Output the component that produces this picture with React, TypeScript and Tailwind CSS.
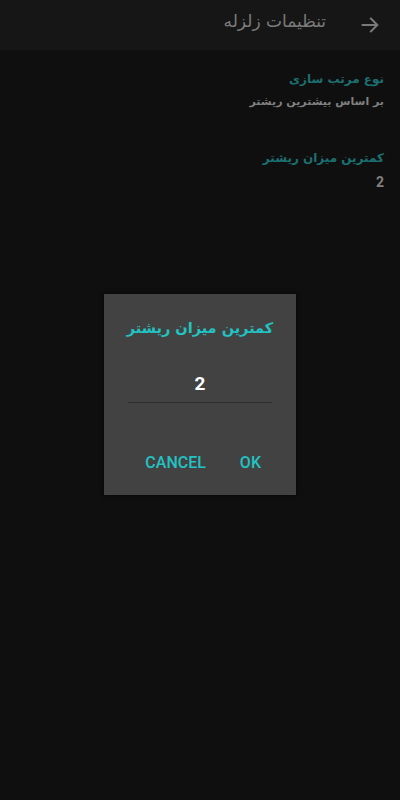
import React from "react";

const fa = { fontFamily: '"DejaVu Sans", "Noto Sans", sans-serif' };

const App = () => {
  return (
    <div className="relative w-[400px] h-[800px] bg-[#0f0f0f] overflow-hidden" dir="rtl">
      {/* header */}
      <header className="h-[50px] bg-[#161616] flex items-center pr-[19px]">
        <svg width="22" height="22" viewBox="0 0 24 24" fill="none" stroke="#7a7a7a" strokeWidth="2.2" strokeLinecap="square">
          <path d="M4 12h15M13 5l7 7-7 7" />
        </svg>
        <h1 className="mr-[33px] text-[17px] text-[#7c7c7c] mb-[6px]" style={fa}>
          تنظیمات زلزله
        </h1>
      </header>

      <div className="px-4 pt-[20px]" style={fa}>
        <div className="flex flex-col gap-[6px]">
          <div className="text-[12px] font-bold text-[#1c7070]">نوع مرتب سازی</div>
          <div className="text-[11px] font-bold text-[#808080]">بر اساس بیشترین ریشتر</div>
        </div>
        <div className="flex flex-col gap-[5px] mt-[38px]">
          <div className="text-[12px] font-bold text-[#1c7070]">کمترین میزان ریشتر</div>
          <div className="text-[14px] font-bold text-[#808080]" style={{ fontFamily: "Roboto, sans-serif" }}>2</div>
        </div>
      </div>

      {/* dialog */}
      <div className="absolute left-[104px] top-[294px] w-[192px] h-[201px] bg-[#424242] shadow-[0_0_4px_rgba(0,0,0,0.8)] flex flex-col items-center">
        <div className="mt-[24px] text-[14.5px] font-bold text-[#22c3c3]" style={fa}>
          کمترین میزان ریشتر
        </div>
        <div className="mt-[30px] w-[144px] flex flex-col items-center border-b border-[#2e2e2e] pb-[4px]">
          <span className="text-[19px] font-bold text-white" style={{ fontFamily: "Roboto, sans-serif" }}>2</span>
        </div>
        <div dir="ltr" className="mt-[48px] self-stretch flex justify-end pr-[35px] gap-[34px] text-[16px] font-medium text-[#22c3c3]" style={{ fontFamily: "Roboto, sans-serif" }}>
          <span>CANCEL</span>
          <span>OK</span>
        </div>
      </div>
    </div>
  );
};

export default App;
